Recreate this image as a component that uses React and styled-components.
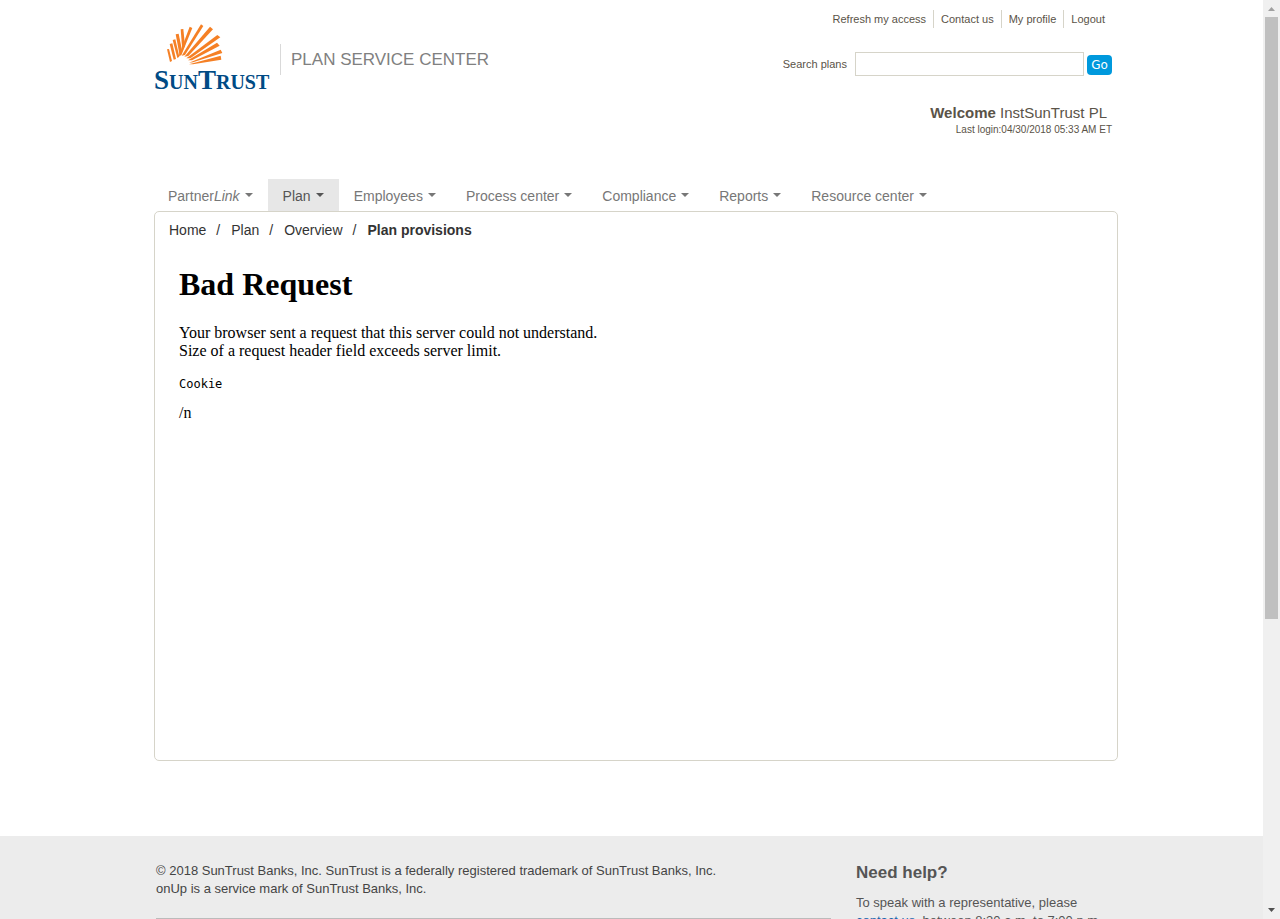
import React from "react";
import styled, { createGlobalStyle } from "styled-components";

const GlobalStyle = createGlobalStyle`
  *, *::before, *::after { box-sizing: border-box; }
  body {
    margin: 0;
    background: #fff;
    color: #5a5348;
    font-family: "Liberation Sans", Arial, sans-serif;
    font-size: 13px;
    line-height: 18px;
  }
  a { color: inherit; text-decoration: none; }
  a:hover { text-decoration: underline; }
`;

const Screen = styled.div`
  display: grid;
  grid-template-columns: minmax(0, 1fr) 17px;
  height: 100vh;
`;

const Page = styled.div`
  display: flex;
  flex-direction: column;
  overflow: hidden;
`;

const Container = styled.div`
  width: 100%;
  max-width: 973px;
  margin: 0 auto;
  padding-left: 9px;
`;

const Header = styled(Container).attrs({ as: "header" })`
  display: flex;
  justify-content: space-between;
  flex-shrink: 0;
  padding-top: 10px;
  padding-right: 6px;
`;

const Brand = styled.div`
  display: flex;
  align-items: flex-start;
  padding-top: 14px;
`;

const Logo = styled.a`
  display: flex;
  flex-direction: column;
  width: 115px;
  margin-right: 11px;
  &:hover { text-decoration: none; }
`;

const Rays = styled.svg`
  display: block;
  width: 56px;
  height: 41px;
  margin-left: 13px;
  fill: #f58025;
`;

const Wordmark = styled.span`
  color: #004b85;
  font-family: "Liberation Serif", "Times New Roman", serif;
  font-size: 20px;
  font-weight: bold;
  line-height: 30px;
`;

const BigCap = styled.span`
  font-size: 27px;
`;

const CenterName = styled.div`
  margin-top: 20px;
  padding-left: 10px;
  border-left: 1px solid #d9d9d9;
  color: #808080;
  font-size: 17px;
  line-height: 31px;
`;

const Account = styled.div`
  display: flex;
  flex-direction: column;
  align-items: flex-end;
  font-size: 11px;
`;

const UtilityLinks = styled.nav`
  display: flex;
  a {
    padding: 0 7px;
  }
  a + a {
    border-left: 1px solid #d6d4c9;
  }
`;

const Search = styled.form`
  display: flex;
  align-items: center;
  margin-top: 24px;
`;

const SearchInput = styled.input`
  width: 229px;
  height: 24px;
  margin: 0 3px 0 8px;
  padding: 0 6px;
  border: 1px solid #d6d4c9;
  background: #fff;
  font: inherit;
`;

const GoButton = styled.button`
  width: 25px;
  height: 20px;
  margin-top: 2px;
  padding: 0;
  border: 0;
  border-radius: 4px;
  background: #0099dd;
  color: #fff;
  font: 12px/20px "DejaVu Sans", sans-serif;
`;

const Welcome = styled.p`
  margin: 28px 5px 0 0;
  font-size: 15px;
`;

const LastLogin = styled.p`
  margin: 0;
  font-size: 10px;
  line-height: 16px;
`;

const Main = styled(Container).attrs({ as: "main" })`
  flex-shrink: 0;
  margin-top: 41px;
`;

const Menu = styled.nav`
  display: flex;
  margin-left: -1px;
`;

const MenuButton = styled.button`
  display: flex;
  align-items: center;
  gap: 5px;
  height: 32px;
  padding: 2px 15px 0;
  border: 0;
  background: ${(p) => (p.$active ? "#e7e7e7" : "transparent")};
  color: ${(p) => (p.$active ? "#555" : "#777")};
  font: 14px/20px "Liberation Sans", Arial, sans-serif;
  white-space: nowrap;

  &::after {
    content: "";
    margin-bottom: 2px;
    border: 4px solid transparent;
    border-top-color: currentColor;
    border-bottom: 0;
  }
`;

const Panel = styled.section`
  min-height: 550px;
  padding: 9px 14px;
  border: 1px solid #d6d4c9;
  border-radius: 5px;
`;

const Breadcrumb = styled.ol`
  display: flex;
  margin: 0;
  padding: 0;
  list-style: none;
  color: #333;
  font-size: 14px;

  li + li::before {
    content: "/";
    margin: 0 11px 0 10px;
    font-weight: normal;
  }
  li[aria-current] { font-weight: bold; }
`;

const Message = styled.article`
  padding: 27px 10px;
  color: #000;
  font-family: "Liberation Serif", "Times New Roman", serif;
  font-size: 16px;

  h1 {
    margin: 0 0 22px;
    font-size: 32px;
    line-height: 36px;
  }
  p { margin: 0; }
  pre {
    margin: 16px 0 12px;
    font: 12px/16px "DejaVu Sans Mono", monospace;
  }
`;

const Footer = styled.footer`
  flex: 1 0 auto;
  margin-top: 75px;
  background: #ececec;
  color: #444;
`;

const FooterColumns = styled(Container)`
  display: grid;
  grid-template-columns: 675px minmax(0, 1fr);
  gap: 25px;
  padding-top: 26px;
  padding-left: 11px;
`;

const Legal = styled.div`
  p {
    margin: 0;
    padding-bottom: 20px;
    border-bottom: 1px solid #bbb;
  }
`;

const Help = styled.div`
  color: #555;
  h2 {
    margin: 0 0 10px;
    font-size: 17px;
    line-height: 22px;
  }
  p { margin: 0; }
  a { color: #1a66ad; }
`;

const ScrollBar = styled.div`
  display: flex;
  flex-direction: column;
  align-items: center;
  background: #f0f0f0;
`;

const ScrollArrow = styled.svg`
  display: block;
  flex: none;
  width: 17px;
  height: 17px;
  fill: ${(p) => (p.$dim ? "#a0a0a0" : "#505050")};
`;

const ScrollTrack = styled.div`
  flex: 1;
  width: 13px;
`;

const ScrollThumb = styled.div`
  height: 68%;
  background: #c0c0c0;
`;

const menuItems = [
  { label: "Plan", active: true },
  { label: "Employees" },
  { label: "Process center" },
  { label: "Compliance" },
  { label: "Reports" },
  { label: "Resource center" },
];

const rays = [
  "66,103 72,102 81,138 75,141",
  "74,87 82,85 93,132 86,134",
  "83,75 91,73 103,125 97,129",
  "92,58 101,56 112,110 104,122",
  "107,43 115,42 120,92 112,108",
  "134,35 142,39 109,121 101,123",
  "168,28 175,33 120,120 110,122",
  "195,35 204,43 130,123 118,125",
  "217,60 226,67 136,130 124,130",
  "216,83 224,92 141,136 129,136",
  "227,104 232,114 144,142 132,143",
  "227,122 229,134 144,148 132,148",
];

export default function App() {
  return (
    <>
      <GlobalStyle />
      <Screen>
        <Page>
          <Header>
            <Brand>
              <Logo href="#" aria-label="SunTrust">
                <Rays viewBox="66 27 168 123" aria-hidden="true">
                  {rays.map((points) => (
                    <polygon key={points} points={points} />
                  ))}
                </Rays>
                <Wordmark>
                  <BigCap>S</BigCap>UN<BigCap>T</BigCap>RUST
                </Wordmark>
              </Logo>
              <CenterName>PLAN SERVICE CENTER</CenterName>
            </Brand>
            <Account>
              <UtilityLinks>
                <a href="#">Refresh my access</a>
                <a href="#">Contact us</a>
                <a href="#">My profile</a>
                <a href="#">Logout</a>
              </UtilityLinks>
              <Search>
                <label htmlFor="plan-search">Search plans</label>
                <SearchInput id="plan-search" type="text" />
                <GoButton type="button">Go</GoButton>
              </Search>
              <Welcome>
                <strong>Welcome</strong> InstSunTrust PL
              </Welcome>
              <LastLogin>Last login:04/30/2018 05:33 AM ET</LastLogin>
            </Account>
          </Header>

          <Main>
            <Menu>
              <MenuButton type="button">
                <span>Partner<em>Link</em></span>
              </MenuButton>
              {menuItems.map((item) => (
                <MenuButton key={item.label} type="button" $active={item.active}>
                  {item.label}
                </MenuButton>
              ))}
            </Menu>
            <Panel>
              <Breadcrumb>
                <li><a href="#">Home</a></li>
                <li><a href="#">Plan</a></li>
                <li><a href="#">Overview</a></li>
                <li aria-current="page">Plan provisions</li>
              </Breadcrumb>
              <Message>
                <h1>Bad Request</h1>
                <p>
                  Your browser sent a request that this server could not understand.
                  <br />
                  Size of a request header field exceeds server limit.
                </p>
                <pre>Cookie</pre>
                <p>/n</p>
              </Message>
            </Panel>
          </Main>

          <Footer>
            <FooterColumns>
              <Legal>
                <p>
                  © 2018 SunTrust Banks, Inc. SunTrust is a federally registered trademark of SunTrust Banks, Inc.
                  <br />
                  onUp is a service mark of SunTrust Banks, Inc.
                </p>
              </Legal>
              <Help>
                <h2>Need help?</h2>
                <p>
                  To speak with a representative, please <a href="#">contact us</a>, between 8:30 a.m. to 7:00 p.m.
                </p>
              </Help>
            </FooterColumns>
          </Footer>
        </Page>
        <ScrollBar aria-hidden="true">
          <ScrollArrow $dim viewBox="0 0 17 17">
            <path d="M5 11h7L8.500 7z" />
          </ScrollArrow>
          <ScrollTrack>
            <ScrollThumb />
          </ScrollTrack>
          <ScrollArrow viewBox="0 0 17 17">
            <path d="M5 6h7L8.500 10z" />
          </ScrollArrow>
        </ScrollBar>
      </Screen>
    </>
  );
}
